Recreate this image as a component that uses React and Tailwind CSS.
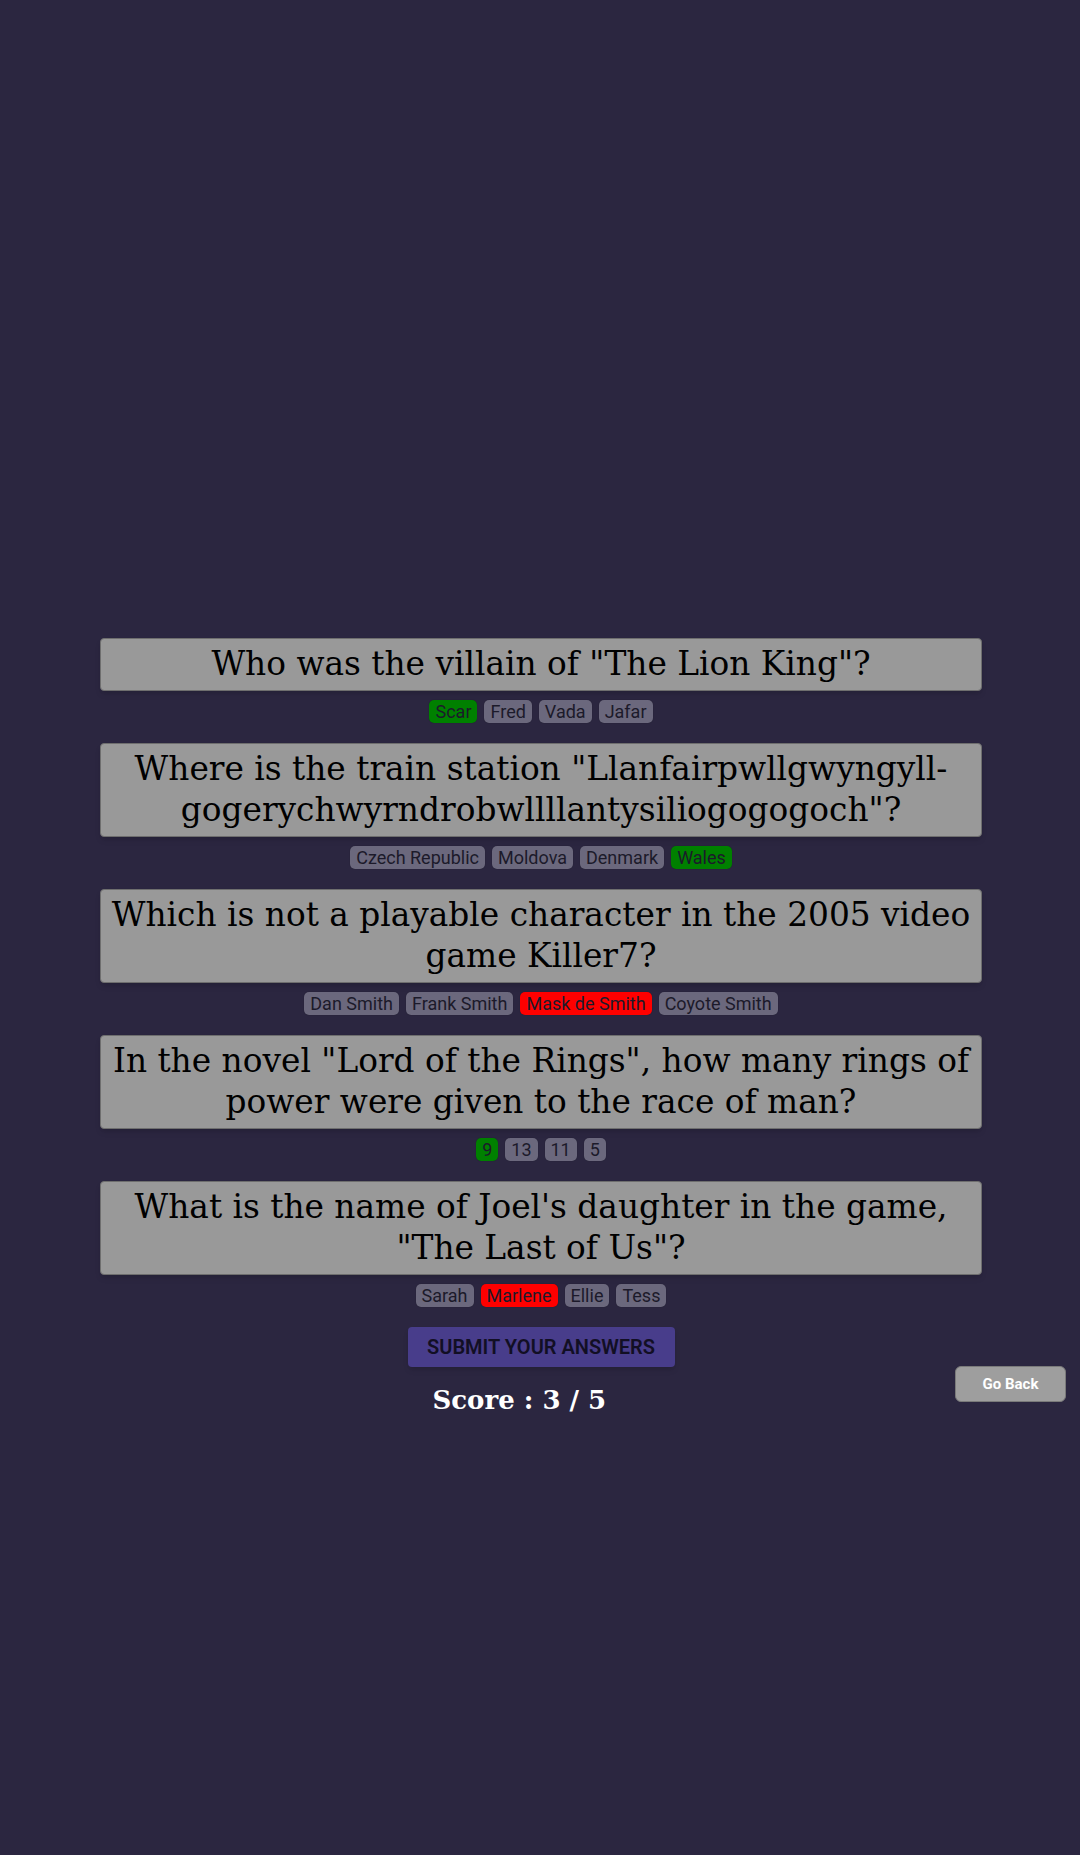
import React from 'react';

const questions = [
  {
    lines: ['Who was the villain of "The Lion King"?'],
    answers: ['Scar', 'Fred', 'Vada', 'Jafar'],
    correct: 'Scar',
    picked: 'Scar',
  },
  {
    lines: ['Where is the train station "Llanfairpwllgwyngyll-', 'gogerychwyrndrobwllllantysiliogogogoch"?'],
    answers: ['Czech Republic', 'Moldova', 'Denmark', 'Wales'],
    correct: 'Wales',
    picked: 'Wales',
  },
  {
    lines: ['Which is not a playable character in the 2005 video', 'game Killer7?'],
    answers: ['Dan Smith', 'Frank Smith', 'Mask de Smith', 'Coyote Smith'],
    correct: 'Coyote Smith',
    picked: 'Mask de Smith',
  },
  {
    lines: ['In the novel "Lord of the Rings", how many rings of', 'power were given to the race of man?'],
    answers: ['9', '13', '11', '5'],
    correct: '9',
    picked: '9',
  },
  {
    lines: ["What is the name of Joel's daughter in the game,", '"The Last of Us"?'],
    answers: ['Sarah', 'Marlene', 'Ellie', 'Tess'],
    correct: 'Sarah',
    picked: 'Marlene',
  },
];

const Chip = ({ label, state }) => {
  const tone =
    state === 'right'
      ? 'bg-[#008000]'
      : state === 'wrong'
      ? 'bg-[#ff0000]'
      : 'bg-[#6b687d]';
  return (
    <span className={`${tone} text-[#1c1a2a] px-[6px] py-[1px] leading-[21px] text-[18px] rounded-[5px] shadow-[0_0_1px_rgba(0,0,0,0.4)]`}>
      {label}
    </span>
  );
};

const App = () => {
  return (
    <div className="min-h-screen w-full bg-[#2b2640] pt-[638px] font-['Roboto',sans-serif]">
      <div className="flex flex-col items-center">
        {questions.map((item, i) => (
          <div key={i} className="w-[882px] ml-[100px] mr-[98px] flex flex-col items-center">
            <div className="w-full bg-[#999999] border border-[#6e6e6e] rounded-[4px] py-[5px] text-center text-black font-['DejaVu_Serif',serif] text-[32.8px] leading-[41px] shadow-md">
              {item.lines.map((l) => (
                <div key={l} className="whitespace-nowrap">{l}</div>
              ))}
            </div>
            <div className="flex gap-[7px] mt-[9px] mb-[20px]">
              {item.answers.map((a) => {
                let state = 'none';
                if (a === item.picked) state = a === item.correct ? 'right' : 'wrong';
                return <Chip key={a} label={a} state={state} />;
              })}
            </div>
          </div>
        ))}
      </div>

      {/* submit + score, go back on the right */}
      <div className="grid grid-cols-[1fr_auto_1fr] items-start">
        <div />
        <div className="flex flex-col items-start ml-[2px]">
          <button className="w-[267px] h-[40px] bg-[#483d8b] rounded-[4px] text-[#120f24] font-semibold uppercase text-[20px] shadow-md">
            Submit your answers
          </button>
          <div className="mt-[12px] ml-[25px] text-white font-bold font-['DejaVu_Serif',serif] text-[26px] leading-[42px]">
            Score : 3 / 5
          </div>
        </div>
        <div className="flex justify-end pr-[14px] pt-[39px]">
          <button className="w-[111px] h-[36px] bg-[#9e9e9e] border border-[#7a7a7a] rounded-[6px] text-white font-bold text-[15px]">
            Go Back
          </button>
        </div>
      </div>
    </div>
  );
};

export default App;
